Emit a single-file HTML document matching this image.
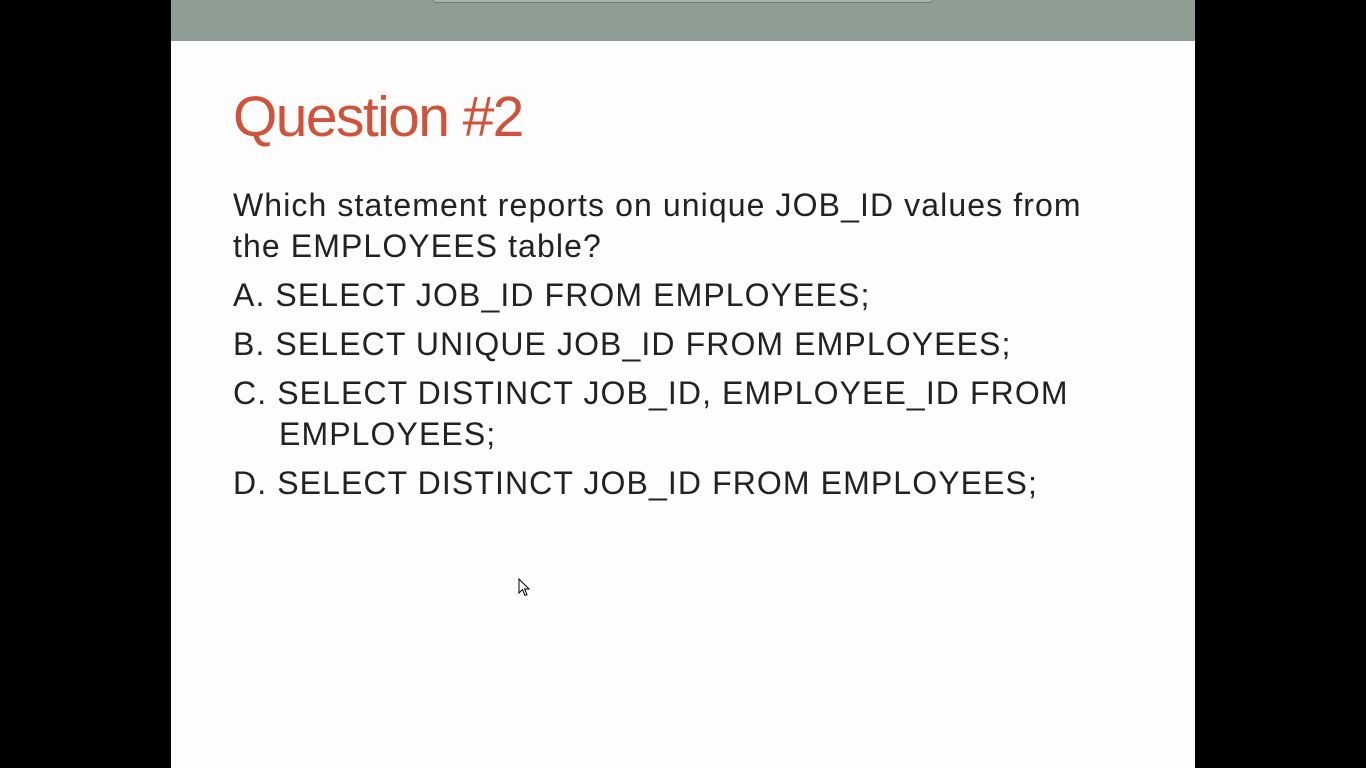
<!DOCTYPE html>
<html><head><meta charset="utf-8"><style>
html,body{margin:0;padding:0;background:#000;width:1366px;height:768px;overflow:hidden;font-family:"Liberation Sans",Arial,sans-serif}
.slide{position:absolute;left:171px;top:0;width:1024px;height:768px;background:#fdfdfd}
.bar{position:absolute;left:0;top:0;width:1024px;height:41px;background:#8f9e95}
.tab{position:absolute;left:262px;top:-4px;width:498px;height:5px;background:#aab4ad;border:1px solid #6f7a72;border-radius:3px}
h1{position:absolute;left:62px;top:82px;margin:0;font-weight:normal;font-size:57px;color:#cf5239;letter-spacing:-1.6px;line-height:70px}
.t{position:absolute;left:62px;font-size:32px;color:#222;line-height:41px;white-space:nowrap;letter-spacing:1.1px}
.cur{position:absolute;left:518px;top:578px}
</style></head><body>
<div class="slide">
<div class="bar"><div class="tab"></div></div>
<h1>Question #2</h1>
<div class="t" style="top:185px">Which statement reports on unique JOB_ID values from<br>the EMPLOYEES table?</div>
<div class="t" style="top:275px">A. SELECT JOB_ID FROM EMPLOYEES;</div>
<div class="t" style="top:324px">B. SELECT UNIQUE JOB_ID FROM EMPLOYEES;</div>
<div class="t" style="top:373px">C. SELECT DISTINCT JOB_ID, EMPLOYEE_ID FROM<br><span style="padding-left:46px">EMPLOYEES;</span></div>
<div class="t" style="top:463px">D. SELECT DISTINCT JOB_ID FROM EMPLOYEES;</div>
</div>
<svg class="cur" width="14" height="20" viewBox="0 0 14 20"><path d="M1 1 L1 15 L4.5 11.5 L7 17.5 L9 16.6 L6.6 11 L11 11 Z" fill="#fff" stroke="#000" stroke-width="1"/></svg>
</body></html>
